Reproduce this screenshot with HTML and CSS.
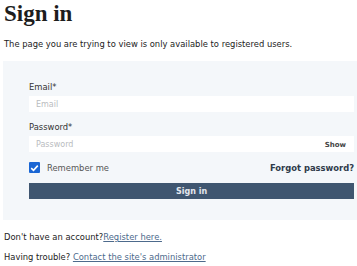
FILE: index.html
```html
<!DOCTYPE html>
<html lang="en">
    <head>
        <meta charset="UTF-8">
        <meta name="viewport" content="width=device-width, initial-scale=1.0">
        <title>Sign in</title>
        <link rel="stylesheet" href="styles.css">
    </head>
    <body>
        <div class="login-page">
            <h1>Sign in</h1>
            <p class="intro">The page you are trying to view is only available to registered users.</p>

            <form class="login-panel">
              <label class="field-label" for="email">Email*</label>
              <input type="email" id="email" placeholder="Email" />

              <label class="field-label" for="password">Password*</label>
              <div class="password-box">
                <input type="password" id="password" placeholder="Password" />
                <span class="show-toggle">Show</span>
              </div>

              <div class="options-row">
                <label class="remember">
                  <span class="checkbox">
                    <svg width="9" height="8" viewBox="0 0 9 8"><path d="M1.2 4.2 L3.5 6.3 L7.8 1.6" fill="none" stroke="#fff" stroke-width="1.6"/></svg>
                  </span>
                  Remember me
                </label>
                <a href="#" class="forgot">Forgot password?</a>
              </div>

              <button type="submit">Sign in</button>
            </form>

            <p class="extra">Don't have an account?<a href="#">Register here.</a></p>
            <p class="extra">Having trouble? <a href="#">Contact the site's administrator</a></p>
        </div>
    </body>
</html>
```

FILE: styles.css
```css
/* Reset default styles */
* {
  margin: 0;
  padding: 0;
  box-sizing: border-box;
}

body {
  font-family: 'DejaVu Sans', sans-serif;
  font-size: 8.4px;
  color: #222;
  background-color: #fff;
}

.login-page {
  padding-left: 3px;
}

.login-page h1 {
  font-family: 'Liberation Serif', serif;
  font-weight: bold;
  font-size: 23px;
  line-height: 28px;
  padding-left: 1px;
  color: #1d1d1d;
}

.intro {
  margin-top: 11px;
  line-height: 10px;
  padding-left: 1px;
}

/* Light panel holding the form */
.login-panel {
  margin-top: 12px;
  background-color: #f4f7fa;
  padding: 20px 3px 21px 26px;
  display: flex;
  flex-direction: column;
}

.field-label {
  line-height: 12px;
  color: #333;
}

.login-panel input {
  width: 100%;
  height: 16px;
  margin-top: 3px;
  border: none;
  background-color: #fff;
  padding: 0 7px;
  font-family: 'DejaVu Sans', sans-serif;
  font-size: 8px;
  outline: none;
}

.login-panel input::placeholder {
  color: #b9bcc0;
}

.login-panel input + .field-label {
  margin-top: 9px;
}

.password-box {
  position: relative;
}

.show-toggle {
  position: absolute;
  right: 8px;
  top: 8px;
  font-size: 7px;
  font-weight: bold;
  color: #444;
}

.options-row {
  margin-top: 10px;
  height: 11px;
  display: flex;
  align-items: center;
  justify-content: space-between;
}

.remember {
  display: flex;
  align-items: center;
  gap: 7px;
  color: #555;
}

.checkbox {
  width: 11px;
  height: 11px;
  border-radius: 1px;
  background-color: #1a66d4;
  display: flex;
  align-items: center;
  justify-content: center;
}

.forgot {
  font-weight: bold;
  color: #2f3b4a;
  text-decoration: none;
}

.login-panel button {
  margin-top: 10px;
  height: 16px;
  border: none;
  background-color: #3f5670;
  color: #e4e8ee;
  font-family: 'DejaVu Sans', sans-serif;
  font-size: 8px;
  font-weight: bold;
}

.extra {
  line-height: 12px;
  padding-left: 1px;
  margin-top: 11px;
}

.extra + .extra {
  margin-top: 8px;
}

.extra a {
  color: #4d6a8c;
}
```
